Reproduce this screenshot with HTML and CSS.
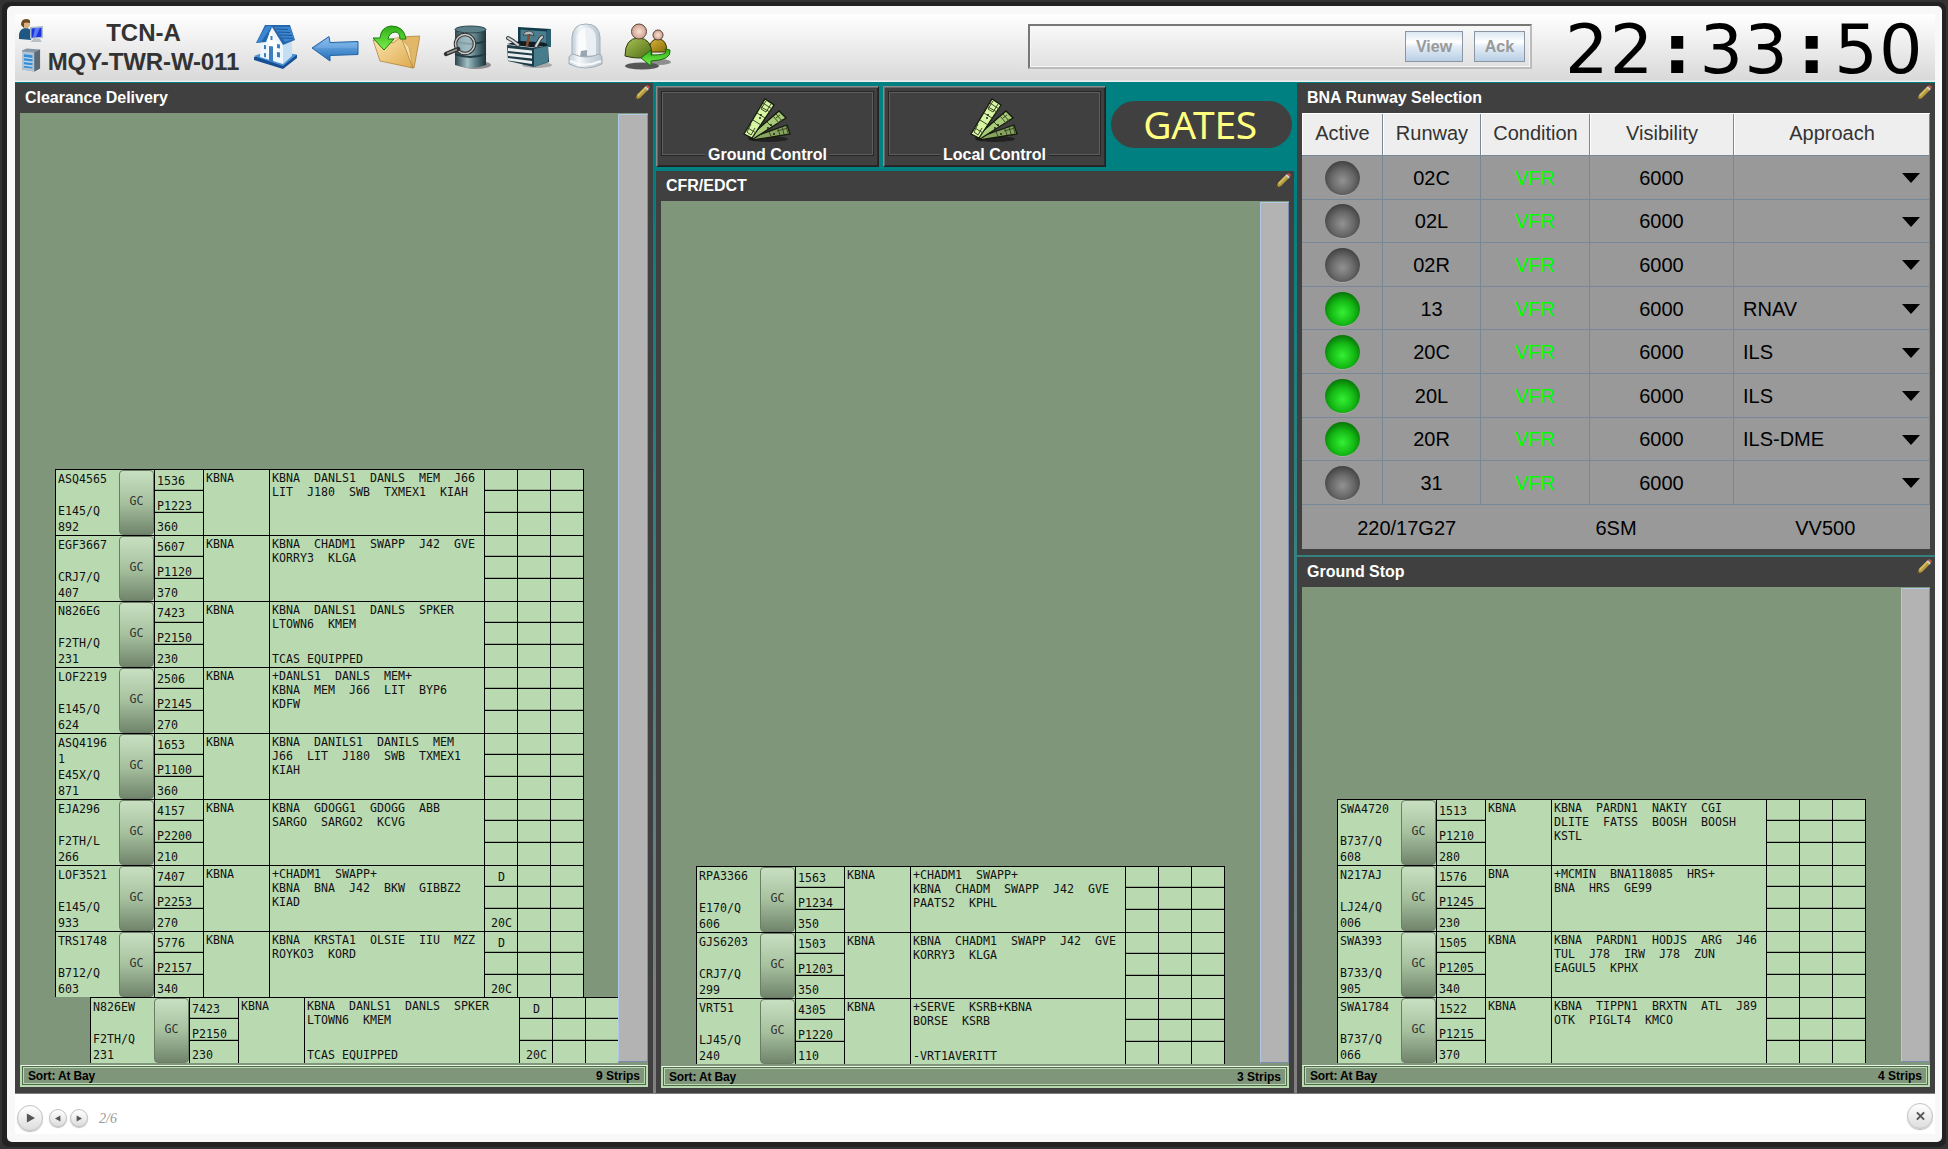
FILE: index.html
```
<!DOCTYPE html>
<html lang="en">
<head>
<meta charset="utf-8">
<title>TCN-A Tower Display</title>
<link rel="stylesheet" href="styles.css">
</head>
<body>
<svg class="defs" aria-hidden="true">
<defs>
<linearGradient id="blue" x1="0" y1="0" x2="0" y2="1"><stop offset="0" stop-color="#8cc0ee"/><stop offset="1" stop-color="#1f6cba"/></linearGradient>
<linearGradient id="steel" x1="0" y1="0" x2="1" y2="0"><stop offset="0" stop-color="#2c444c"/><stop offset=".4" stop-color="#a3c0c5"/><stop offset=".65" stop-color="#5f828a"/><stop offset="1" stop-color="#1e3239"/></linearGradient>
<linearGradient id="gold" x1="0" y1="0" x2="1" y2="1"><stop offset="0" stop-color="#fbe7b0"/><stop offset="1" stop-color="#dfa94e"/></linearGradient>
<linearGradient id="green" x1="0" y1="0" x2="0" y2="1"><stop offset="0" stop-color="#2fae18"/><stop offset="1" stop-color="#7df04c"/></linearGradient>
<linearGradient id="glass" x1="0" y1="0" x2="1" y2="0"><stop offset="0" stop-color="#c3ced6"/><stop offset=".3" stop-color="#f4f8fa"/><stop offset=".6" stop-color="#d3dce2"/><stop offset="1" stop-color="#bcc8d1"/></linearGradient>
<radialGradient id="skin"><stop offset="0" stop-color="#fbe0d3"/><stop offset="1" stop-color="#cda08e"/></radialGradient>
<linearGradient id="coat" x1="0" y1="0" x2="1" y2="1"><stop offset="0" stop-color="#a9c455"/><stop offset="1" stop-color="#4f6a14"/></linearGradient>
<linearGradient id="amber" x1="0" y1="0" x2="1" y2="1"><stop offset="0" stop-color="#d8b63a"/><stop offset="1" stop-color="#8a6a08"/></linearGradient>
<symbol id="pencil" viewBox="0 0 16 16"><path d="M1 15l2-5 8-8 3 3-8 8z" fill="#b59a3c"/><path d="M3 10l8-8 1.2 1.2L4.5 11.5z" fill="#d3bd62"/><path d="M1 15l1-2.7 1.6 1.6z" fill="#3a3020"/><path d="M10.500 2.500l1.500-1.500 3 3-1.500 1.500z" fill="#c9cdd4"/><path d="M12 1l1.400-1 2.600 2-1 2z" fill="#c8503c"/></symbol>
<symbol id="strips" viewBox="0 0 50 46"><ellipse cx="25" cy="41" rx="20" ry="3" fill="#222"/>
<g stroke="#141a0c" stroke-width="1.300"><path d="M7 40L44 27l3 9L10 42z" fill="#87a45f"/><path d="M6 39L36 13l7 7-33 21z" fill="#a7cb76"/><path d="M1 36L22 1l9 6L9 40z" fill="#d8f5a4"/></g>
<g stroke="#3a4a24" stroke-width="1" fill="none"><path d="M20 5l9 6M18 9l9 5M14 15l8 5M10 22l8 5M5 30l8 5M23 3l-5 8 5 3 5-8M8 26l-4 8 4 3 4-7"/><path d="M33 16l6 7M30 18l6 7M33 20l4-3M36 24l4-3M24 24l5 5"/><path d="M35 31l2 6M39 29l2 7M43 28l2 7M34 33l11-3M26 34l2 4"/></g>
<path d="M17 17h2M16 20h2M27 27h2M24 30h2M30 36h2" stroke="#222" stroke-width="1.500"/></symbol>
<symbol id="caret" viewBox="0 0 18 10"><path d="M0 0h18L9 10z"/></symbol>
</defs>
</svg>
<div class="shell"><div class="frame"><div class="app">
<header class="topbar">
  <div class="station-icons">
    <svg class="ic-user" viewBox="0 0 24 24"><path d="M0 20q-1-10 6-11 6 0 7 5l-1 7z" fill="#1f5783"/><circle cx="7" cy="5" r="4.200" fill="#d9b184"/><path d="M2 6q0-6 5-6 5 0 4 4-4-1-6 0v5z" fill="#6d4a20"/><path d="M11 8l13-1v12l-13 1z" fill="#aebccb"/><path d="M12.500 9.500l10-.8v9l-10 .8z" fill="#1a34e0"/><path d="M16 9.200l5-.4-4 9.300-3 .2z" fill="#5d78f5"/><path d="M15 20h6l2 3h-12z" fill="#b9bfc5"/></svg>
    <svg class="ic-server" viewBox="0 0 20 24"><path d="M0 2l5-2 14 1v20l-6 3-13-2z" fill="#8595a6"/><path d="M0 3l13 1v20l-13-2z" fill="#b5c4d2"/><path d="M13 4l6-3v20l-6 3z" fill="#5c6874"/><path d="M2 6l9 1v3l-9-1zm0 4l9 1v2.500l-9-1zm0 4l9 1v2.500l-9-1zm0 4l9 1v2l-9-1z" fill="#2f8fdc"/><path d="M2 9.500l9 1M2 13.500l9 1M2 17.500l9 1" stroke="#cfe0ee" stroke-width=".8"/></svg>
  </div>
  <div class="station"><div>TCN-A</div><div>MQY-TWR-W-011</div></div>
  <nav class="tools">
    <svg class="tool home" viewBox="0 0 48 48"><path d="M2 34l14-5 29 3v3L31 46 2 37z" fill="#174f93"/><path d="M2 33l14-5 29 3.500L31 43z" fill="#4c92d3"/><path d="M9 18l8-12 14 14v21L8 34z" fill="#eef6fd"/><path d="M31 20l9-3v16l-9 8z" fill="#c6def3"/><path d="M13 2h25l5 15-12 5L20 4l-6 15-10 1z" fill="#2467ad"/><path d="M14 3h6L9 19l-5 1zM22 4h16l4 12-9 3z" fill="#3b86cf"/><path d="M24 6l12 .5M26 9l12 .5M28 12l12 .5M30 15l11 .3" stroke="#1c5697" fill="none"/><path d="M18 8l7 12v9l-9 2V16z" fill="#fff"/><path d="M17 23l4 .5V39l-4-1zM12 22l2 .3v4l-2-.4zm0 8l2 .3v4l-2-.4zm13-1l3 .5v5l-3-.5zM18.500 13h2v4h-2zM25 21l3 .4v4l-3-.4z" fill="#3a7fc0"/></svg>
    <svg class="tool back" viewBox="0 0 48 48"><path d="M1 25L18 13.500l1 6 28-1v13l-28 1v5.500z" fill="url(#blue)" stroke="#2563a4"/><path d="M4 25l13-9v5l29-1v5z" fill="#8fc3f0" opacity=".3"/></svg>
    <svg class="tool folder" viewBox="0 0 48 48"><path d="M28 14l20-1-6 32-4-1z" fill="#e2b767" stroke="#a77a33" stroke-width=".7"/><path d="M4 20l24-6 9 10 4 21z" fill="#f5dfa6" stroke="#b98d42" stroke-width=".6"/><path d="M1 17l20 3 8-6 12 31L8 38z" fill="url(#gold)" stroke="#a77a33" stroke-width=".7"/><path d="M34 16Q32 3 19 3 9 4 8 15H1l11 12 10-11h-6q1-6 7-7 5 0 5 7z" fill="url(#green)" stroke="#1c7d10"/></svg>
    <svg class="tool barrel" viewBox="0 0 48 48"><ellipse cx="33" cy="42" rx="15" ry="4" fill="#555" opacity=".6"/><path d="M12 6v36q15 6 31 0V6z" fill="url(#steel)"/><ellipse cx="27.500" cy="6.500" rx="15.500" ry="3.500" fill="#5b8089" stroke="#2c444c"/><path d="M12 18q15 6 31 0M12 31q15 6 31 0" stroke="#223a41" stroke-width="2" fill="none"/><circle cx="22" cy="21" r="9.500" fill="#9fb9bf" opacity=".8"/><circle cx="22" cy="21" r="9.500" fill="none" stroke="#333" stroke-width="3.500"/><circle cx="22" cy="21" r="9.500" fill="none" stroke="#c8c8c8" stroke-width="1.500"/><path d="M15 26L3 31" stroke="#333" stroke-width="4.500" stroke-linecap="round"/><path d="M14 26.500L4 30.500" stroke="#999" stroke-width="1.500"/></svg>
    <svg class="tool toolbox" viewBox="0 0 48 48"><ellipse cx="32" cy="42" rx="15" ry="3" fill="#555" opacity=".4"/><path d="M13 4l33 2v18l-33-4z" fill="#123b49"/><path d="M15.500 6.500l26 2v12l-26-2z" fill="#4a7d8e"/><path d="M42 7l4-1v18l-4-2z" fill="#2c6172"/><path d="M2 22l27 3 14-3 1 17-15 5L3 38z" fill="#1d3b46"/><path d="M29 26l14-3v16l-14 5z" fill="#467c8b"/><path d="M3 25l24 2.500v3L3 28zm0 5l24 2.500v3L3 33zm0 5l24 3v3L3 37.500z" fill="#e8edef"/><path d="M2 21l27 3.500L43 22l-4-2.500-24-1.500z" fill="#111f25"/><path d="M3 15l5 3 5 4M31 23l4-7 2-2" stroke="#3c4347" stroke-width="4" stroke-linecap="round" fill="none"/><path d="M3 15l5 3 5 4M31 23l4-7 2-2" stroke="#d8dcdf" stroke-width="2" stroke-linecap="round" fill="none"/><path d="M24 12l-2 11" stroke="#8a4a2c" stroke-width="2.500"/><path d="M18 12q1-4 6-4 4 0 5 5l-4-1.500-3 .5z" fill="#b4bbbf" stroke="#333" stroke-width=".8"/></svg>
    <svg class="tool lamp" viewBox="0 0 48 48"><path d="M10 34V14Q11 1 24 1t14 13v20z" fill="url(#glass)" stroke="#a3b0ba"/><path d="M14 32V14q2-10 10-10t10 10v18z" fill="#e9eff3"/><path d="M16 32V14q1-9 7-9l2 27z" fill="#fff" opacity=".75"/><path d="M18 34l1-6 6-1v7z" fill="#9aa7b1"/><path d="M7 34q2-3 4-3 13 6 26 0 2 0 3 3v7q-16 8-33 0z" fill="url(#glass)" stroke="#9fadb8"/><path d="M8 38q15 7 31 0" stroke="#f6fafc" stroke-width="2" fill="none"/></svg>
    <svg class="tool people" viewBox="0 0 48 48"><ellipse cx="18" cy="43" rx="17" ry="3.500" fill="#333" opacity=".8"/><ellipse cx="36" cy="39" rx="11" ry="3" fill="#555" opacity=".6"/><path d="M25 29q0-13 9-13t9 13z" fill="url(#amber)" stroke="#3c3006"/><circle cx="34" cy="12" r="5" fill="url(#skin)" stroke="#5b443b"/><path d="M1 33q0-18 13.500-18T28 33q-13 4-27 0z" fill="url(#coat)" stroke="#2e3c0c"/><circle cx="15" cy="8.500" r="7.500" fill="url(#skin)" stroke="#5b443b"/><path d="M17 35l10-8v5q15 0 15-3l-1-3 5 1q2 10-19 11v5z" fill="url(#green)" stroke="#1c6d10"/></svg>
  </nav>
  <div class="message"><button>View</button><button>Ack</button></div>
  <div class="clock">22<b>:</b>33<b>:</b>50</div>
</header>
<main class="board">
  <section class="column">
    <section class="panel">
      <h2>Clearance Delivery<svg class="edit"><use href="#pencil"/></svg></h2>
      <div class="bay"><div class="strips">
        <article class="strip"><div class="ident"><span>ASQ4565</span><span>E145/Q</span><span>892</span></div><button>GC</button><div class="stack"><span>1536</span><span>P1223</span><span>360</span></div><div class="dep">KBNA</div><div class="route"><pre>KBNA  DANLS1  DANLS  MEM  J66
LIT  J180  SWB  TXMEX1  KIAH</pre></div><div class="marks"></div></article>
        <article class="strip"><div class="ident"><span>EGF3667</span><span>CRJ7/Q</span><span>407</span></div><button>GC</button><div class="stack"><span>5607</span><span>P1120</span><span>370</span></div><div class="dep">KBNA</div><div class="route"><pre>KBNA  CHADM1  SWAPP  J42  GVE
KORRY3  KLGA</pre></div><div class="marks"></div></article>
        <article class="strip"><div class="ident"><span>N826EG</span><span>F2TH/Q</span><span>231</span></div><button>GC</button><div class="stack"><span>7423</span><span>P2150</span><span>230</span></div><div class="dep">KBNA</div><div class="route"><pre>KBNA  DANLS1  DANLS  SPKER
LTOWN6  KMEM</pre><pre>TCAS EQUIPPED</pre></div><div class="marks"></div></article>
        <article class="strip"><div class="ident"><span>LOF2219</span><span>E145/Q</span><span>624</span></div><button>GC</button><div class="stack"><span>2506</span><span>P2145</span><span>270</span></div><div class="dep">KBNA</div><div class="route"><pre>+DANLS1  DANLS  MEM+
KBNA  MEM  J66  LIT  BYP6
KDFW</pre></div><div class="marks"></div></article>
        <article class="strip"><div class="ident"><span>ASQ4196<br>1</span><span>E45X/Q</span><span>871</span></div><button>GC</button><div class="stack"><span>1653</span><span>P1100</span><span>360</span></div><div class="dep">KBNA</div><div class="route"><pre>KBNA  DANILS1  DANILS  MEM
J66  LIT  J180  SWB  TXMEX1
KIAH</pre></div><div class="marks"></div></article>
        <article class="strip"><div class="ident"><span>EJA296</span><span>F2TH/L</span><span>266</span></div><button>GC</button><div class="stack"><span>4157</span><span>P2200</span><span>210</span></div><div class="dep">KBNA</div><div class="route"><pre>KBNA  GDOGG1  GDOGG  ABB
SARGO  SARGO2  KCVG</pre></div><div class="marks"></div></article>
        <article class="strip"><div class="ident"><span>LOF3521</span><span>E145/Q</span><span>933</span></div><button>GC</button><div class="stack"><span>7407</span><span>P2253</span><span>270</span></div><div class="dep">KBNA</div><div class="route"><pre>+CHADM1  SWAPP+
KBNA  BNA  J42  BKW  GIBBZ2
KIAD</pre></div><div class="marks"><span>D</span><span>20C</span></div></article>
        <article class="strip"><div class="ident"><span>TRS1748</span><span>B712/Q</span><span>603</span></div><button>GC</button><div class="stack"><span>5776</span><span>P2157</span><span>340</span></div><div class="dep">KBNA</div><div class="route"><pre>KBNA  KRSTA1  OLSIE  IIU  MZZ
ROYKO3  KORD</pre></div><div class="marks"><span>D</span><span>20C</span></div></article>
        <article class="strip shifted"><div class="ident"><span>N826EW</span><span>F2TH/Q</span><span>231</span></div><button>GC</button><div class="stack"><span>7423</span><span>P2150</span><span>230</span></div><div class="dep">KBNA</div><div class="route"><pre>KBNA  DANLS1  DANLS  SPKER
LTOWN6  KMEM</pre><pre>TCAS EQUIPPED</pre></div><div class="marks"><span>D</span><span>20C</span></div></article>
      </div><div class="scroll"></div></div>
      <footer class="status"><span>Sort: At Bay</span><span>9 Strips</span></footer>
    </section>
  </section>
  <section class="column">
    <div class="shortcuts">
      <div class="shortcut"><fieldset><svg><use href="#strips"/></svg></fieldset><span>Ground Control</span></div>
      <div class="shortcut"><fieldset><svg><use href="#strips"/></svg></fieldset><span>Local Control</span></div>
      <div class="gates">GATES</div>
    </div>
    <section class="panel low">
      <h2>CFR/EDCT<svg class="edit"><use href="#pencil"/></svg></h2>
      <div class="bay"><div class="strips">
        <article class="strip"><div class="ident"><span>RPA3366</span><span>E170/Q</span><span>606</span></div><button>GC</button><div class="stack"><span>1563</span><span>P1234</span><span>350</span></div><div class="dep">KBNA</div><div class="route"><pre>+CHADM1  SWAPP+
KBNA  CHADM  SWAPP  J42  GVE
PAATS2  KPHL</pre></div><div class="marks"></div></article>
        <article class="strip"><div class="ident"><span>GJS6203</span><span>CRJ7/Q</span><span>299</span></div><button>GC</button><div class="stack"><span>1503</span><span>P1203</span><span>350</span></div><div class="dep">KBNA</div><div class="route"><pre>KBNA  CHADM1  SWAPP  J42  GVE
KORRY3  KLGA</pre></div><div class="marks"></div></article>
        <article class="strip"><div class="ident"><span>VRT51</span><span>LJ45/Q</span><span>240</span></div><button>GC</button><div class="stack"><span>4305</span><span>P1220</span><span>110</span></div><div class="dep">KBNA</div><div class="route"><pre>+SERVE  KSRB+KBNA
BORSE  KSRB</pre><pre>-VRT1AVERITT</pre></div><div class="marks"></div></article>
      </div><div class="scroll"></div></div>
      <footer class="status"><span>Sort: At Bay</span><span>3 Strips</span></footer>
    </section>
  </section>
  <section class="column">
    <section class="panel runways">
      <h2>BNA Runway Selection<svg class="edit"><use href="#pencil"/></svg></h2>
      <div class="grid">
        <div class="row head"><span>Active</span><span>Runway</span><span>Condition</span><span>Visibility</span><span>Approach</span></div>
        <div class="row"><span><i class="led"></i></span><span>02C</span><span>VFR</span><span>6000</span><span><svg><use href="#caret"/></svg></span></div>
        <div class="row"><span><i class="led"></i></span><span>02L</span><span>VFR</span><span>6000</span><span><svg><use href="#caret"/></svg></span></div>
        <div class="row"><span><i class="led"></i></span><span>02R</span><span>VFR</span><span>6000</span><span><svg><use href="#caret"/></svg></span></div>
        <div class="row"><span><i class="led on"></i></span><span>13</span><span>VFR</span><span>6000</span><span>RNAV<svg><use href="#caret"/></svg></span></div>
        <div class="row"><span><i class="led on"></i></span><span>20C</span><span>VFR</span><span>6000</span><span>ILS<svg><use href="#caret"/></svg></span></div>
        <div class="row"><span><i class="led on"></i></span><span>20L</span><span>VFR</span><span>6000</span><span>ILS<svg><use href="#caret"/></svg></span></div>
        <div class="row"><span><i class="led on"></i></span><span>20R</span><span>VFR</span><span>6000</span><span>ILS-DME<svg><use href="#caret"/></svg></span></div>
        <div class="row"><span><i class="led"></i></span><span>31</span><span>VFR</span><span>6000</span><span><svg><use href="#caret"/></svg></span></div>
      </div>
      <div class="weather"><span>220/17G27</span><span>6SM</span><span>VV500</span></div>
    </section>
    <section class="panel">
      <h2>Ground Stop<svg class="edit"><use href="#pencil"/></svg></h2>
      <div class="bay"><div class="strips">
        <article class="strip"><div class="ident"><span>SWA4720</span><span>B737/Q</span><span>608</span></div><button>GC</button><div class="stack"><span>1513</span><span>P1210</span><span>280</span></div><div class="dep">KBNA</div><div class="route"><pre>KBNA  PARDN1  NAKIY  CGI
DLITE  FATSS  BOOSH  BOOSH
KSTL</pre></div><div class="marks"></div></article>
        <article class="strip"><div class="ident"><span>N217AJ</span><span>LJ24/Q</span><span>006</span></div><button>GC</button><div class="stack"><span>1576</span><span>P1245</span><span>230</span></div><div class="dep">BNA</div><div class="route"><pre>+MCMIN  BNA118085  HRS+
BNA  HRS  GE99</pre></div><div class="marks"></div></article>
        <article class="strip"><div class="ident"><span>SWA393</span><span>B733/Q</span><span>905</span></div><button>GC</button><div class="stack"><span>1505</span><span>P1205</span><span>340</span></div><div class="dep">KBNA</div><div class="route"><pre>KBNA  PARDN1  HODJS  ARG  J46
TUL  J78  IRW  J78  ZUN
EAGUL5  KPHX</pre></div><div class="marks"></div></article>
        <article class="strip"><div class="ident"><span>SWA1784</span><span>B737/Q</span><span>066</span></div><button>GC</button><div class="stack"><span>1522</span><span>P1215</span><span>370</span></div><div class="dep">KBNA</div><div class="route"><pre>KBNA  TIPPN1  BRXTN  ATL  J89
OTK  PIGLT4  KMCO</pre></div><div class="marks"></div></article>
      </div><div class="scroll"></div></div>
      <footer class="status"><span>Sort: At Bay</span><span>4 Strips</span></footer>
    </section>
  </section>
</main>
<footer class="player">
  <button class="round big"><svg viewBox="0 0 10 10"><path d="M1 0l9 5-9 5z"/></svg></button>
  <button class="round"><svg viewBox="0 0 10 10"><path d="M9 0L0 5l9 5z"/></svg></button>
  <button class="round"><svg viewBox="0 0 10 10"><path d="M1 0l9 5-9 5z"/></svg></button>
  <span class="page">2/6</span>
  <button class="round big close"><svg viewBox="0 0 10 10"><path d="M1 1l8 8M9 1L1 9"/></svg></button>
</footer>
</div></div></div>
</body>
</html>
```
FILE: styles.css
```
* { box-sizing: border-box; }
body { margin: 0; height: 1149px; padding: 2px; background: #333; font-family: "Liberation Sans", Arial, sans-serif; overflow: hidden; }
button { font: inherit; padding: 0; margin: 0; }
svg { display: block; }
.defs { position: absolute; width: 0; height: 0; }
.shell { height: 1145px; padding: 4px 4px 5px 5px; background: #222; border-radius: 7px; }
.frame { height: 1136px; padding: 8px 7px 8px 8px; background: #f8f8f8; border-radius: 5px; }
.app { height: 1120px; background: #fff; display: flex; flex-direction: column; }

/* top bar */
.topbar { height: 68px; display: flex; background: linear-gradient(#fff, #d9d9d9 66px, #eee 67px); border-bottom: 1px solid #eee; }
.station-icons { width: 30px; padding: 5px 0 0 4px; }
.ic-user { width: 24px; height: 24px; }
.ic-server { width: 19px; height: 24px; margin: 5px 0 0 3px; }
.station { width: 197px; padding-top: 4px; text-align: center; font-weight: bold; font-size: 24px; line-height: 29px; color: #333; white-space: nowrap; }
.station div:last-child { letter-spacing: -.1px; }
.tools { display: flex; padding: 9px 0 0 10px; }
.tool { width: 48px; height: 48px; }
.back { margin-left: 11px; }
.folder { margin-left: 13px; }
.barrel { margin-left: 23px; }
.toolbox { margin-left: 14px; }
.lamp { margin-left: 9px; }
.people { margin-left: 14px; }
.message { width: 504px; height: 45px; margin: 10px 0 0 356px; border: 2px solid; border-color: #777 #bbb #bbb #777; outline: 1px solid #f6f6f6; outline-offset: -3px; display: flex; justify-content: flex-end; gap: 11px; padding: 5px 5px 0 0; }
.message button { width: 51px; height: 31px; border: 1px solid #8a96a4; background: linear-gradient(#dbe7f2, #fff 35%, #e4edf5 50%, #b8cfe5); color: #999; font-weight: bold; font-size: 16px; line-height: 28px; }
.message button:first-child { width: 58px; }
.clock { margin-left: 33px; font-family: "DejaVu Sans", sans-serif; font-size: 68.500px; line-height: 70px; letter-spacing: 1.200px; color: #000; white-space: nowrap; }
.clock b { display: inline-block; width: 45px; text-align: center; letter-spacing: 0; }

/* board */
.board { height: 1012px; padding: 1px 0; display: grid; grid-template-columns: 638px 638px 638px; gap: 3px; background: linear-gradient(#008080 10%, #3c8080 50%, #808080 92%); }
.column { display: flex; flex-direction: column; gap: 2px; min-width: 0; }
.panel { flex: 1; min-height: 0; background: #404040; padding: 0 5px 6px; display: flex; flex-direction: column; }
.panel h2 { margin: 0; height: 30px; padding: 6px 0 0 5px; font-size: 16px; line-height: 17px; letter-spacing: -.02px; color: #fff; display: flex; justify-content: space-between; }
.edit { width: 16px; height: 16px; margin: -4px -2px 0 0; }
.bay { flex: 1; min-height: 0; background: #80967b; border-bottom: 2px solid #80967b; display: flex; }
.strips { width: 598px; height: 100%; padding: 0 0 0 35px; display: flex; flex-direction: column; justify-content: flex-end; overflow: hidden; }
.column + .column .strips { width: 599px; }
.scroll { flex: 1; margin: 1px 0; background: #b3b3b3; border: 1px solid #7a8db0; border-left-color: #b0c8e8; border-top-color: #b0c8e8; }
.status { height: 22px; padding: 0 6px 0 6px; border: 2px solid #b9d9b1; border-width: 1px 2px 2px; border-top-color: #eef8ea; background: #80967b; box-shadow: inset 0 0 0 1px #4f6b4b, inset 0 0 0 2px #b9d9b1; display: flex; justify-content: space-between; align-items: center; font-weight: bold; font-size: 12px; color: #000; }
.status span:first-child { letter-spacing: -.15px; }
.status span { padding-top: 1px; }
.panel.low { padding-bottom: 5px; }

/* flight strips */
.strip { flex: none; width: 529px; height: 66px; display: grid; grid-template-columns: 63px 35px 50px 66px 215px 99px; border: solid #000; border-width: 1px 0 0 1px; background: #b9d9b1; font-family: "DejaVu Sans Mono", monospace; font-size: 11.630px; line-height: 14px; color: #111; }
.strip.shifted { margin-left: 35px; }
.ident { padding: 1px 0 0 2px; display: grid; grid-template-rows: 32px 16px 16px; line-height: 16px; }
.strip button { height: 65px; padding-bottom: 3px; border: 1px solid #6b7d66; border-radius: 4px; background: linear-gradient(#c8e0c1, #a7c19f 50%, #71856c); color: #333; }
.stack { border: solid #000; border-width: 0 1px; display: grid; grid-template-rows: 21px 22px 22px; }
.stack span { border-bottom: 1px solid #000; padding: 4px 0 0 2px; box-shadow: 0 -1px #93ad8c inset; }
.stack span:nth-child(2) { padding-top: 8px; }
.stack span:last-child { border: 0; padding-top: 7px; box-shadow: none; }
.dep { border-right: 1px solid #000; padding: 1px 0 0 2px; }
.route { border-right: 1px solid #000; padding: 1px 0 1px 2px; display: flex; flex-direction: column; justify-content: space-between; }
.route pre { margin: 0; font: inherit; }
.marks { display: grid; grid-template: 22px 22px 21px / 33px 33px 33px; text-align: center; background: linear-gradient(#000, #000) 0 20px / 100% 1px no-repeat, linear-gradient(#000, #000) 0 42px / 100% 1px no-repeat, linear-gradient(90deg, transparent 32px, #000 32px) 0 0 / 33px 100%, linear-gradient(#93ad8c, #93ad8c) 0 19px / 100% 1px no-repeat, linear-gradient(#93ad8c, #93ad8c) 0 41px / 100% 1px no-repeat; }
.marks span { padding-top: 4px; }
.marks span:last-child:not(:first-child) { grid-row: 3; grid-column: 1; padding-top: 6px; }

/* shortcuts */
.shortcuts { height: 86px; padding-top: 3px; display: flex; gap: 4px; }
.shortcut { width: 223px; height: 81px; padding: 4px 4px 0; border: 1px solid; border-color: #8c8c8c #222 #222 #8c8c8c; box-shadow: inset 1px 1px #666, inset -1px -1px #2a2a2a; background: #404040; text-align: center; color: #fff; font-weight: bold; font-size: 16px; line-height: 18px; }
.shortcut fieldset { margin: 0; height: 65px; padding: 6px 0 0; border: 1px solid #262626; outline: 1px solid #5e5e5e; outline-offset: -2px; display: flex; justify-content: center; }
.shortcut svg { width: 50px; height: 46px; }
.shortcut span { display: inline-block; position: relative; top: -10px; padding: 0 3px; background: #404040; }
.gates { width: 181px; height: 47px; margin: 15px 0 0 1px; border-radius: 24px; background: #404040; color: #ffff80; text-align: center; text-indent: -3px; font-family: "Noto Sans", sans-serif; font-size: 39px; line-height: 46px; letter-spacing: -.4px; }

/* runway table */
.panel.runways { flex: none; height: 472px; }
.grid { background: #999; }
.row { height: 43.600px; display: grid; grid-template-columns: 81px 98px 109px 144px 196px; font-size: 20px; color: #000; border-bottom: 1px solid #778899; }
.row.head { height: 43px; background: #eee; color: #333; border-top: 1px solid #fff; }
.row span { display: flex; align-items: center; justify-content: center; border-right: 1px solid #778899; padding-top: 2px; }
.row.head span { border-left: 1px solid #fff; padding: 0 0 2px; }
.row:not(.head) span:nth-child(3) { color: #0f0; }
.row:not(.head) span:last-child { justify-content: space-between; padding: 2px 9px 0 9px; }
.row svg { width: 18px; height: 10px; margin: 0 0 0 auto; }
.led { width: 35px; height: 35px; border-radius: 50%; background: radial-gradient(circle at 50% 58%, #929292, #6a6a6a 42%, #2c2c2c 92%); border-bottom: 1px solid #aaa; }
.led.on { background: radial-gradient(circle at 50% 60%, #35f035, #14b814 45%, #004a00 95%); }
.weather { flex: 1; background: #999; display: grid; grid-template-columns: 1fr 1fr 1fr; align-items: center; text-align: center; font-size: 20px; padding-top: 3px; }

/* player bar */
.player { flex: 1; display: flex; align-items: center; padding: 8px 2px 0; }
.round { width: 18px; height: 18px; margin-left: 3px; border: 1px solid #c2c2c2; border-radius: 50%; background: linear-gradient(#fff, #ddd); box-shadow: 0 1px 1px #bbb; display: flex; align-items: center; justify-content: center; }
.round svg { width: 6px; height: 7px; fill: #555; }
.round.big { width: 26px; height: 26px; margin-left: 0; }
.round.big svg { width: 9px; height: 10px; }
.round.big + .round { margin-left: 6px; }
.round.close { margin: -5px 0 0 auto; }
.close svg { stroke: #555; stroke-width: 2.200; }
.page { margin: 2px 0 0 11px; font: italic 14px "Liberation Serif", serif; color: #999; }
```
